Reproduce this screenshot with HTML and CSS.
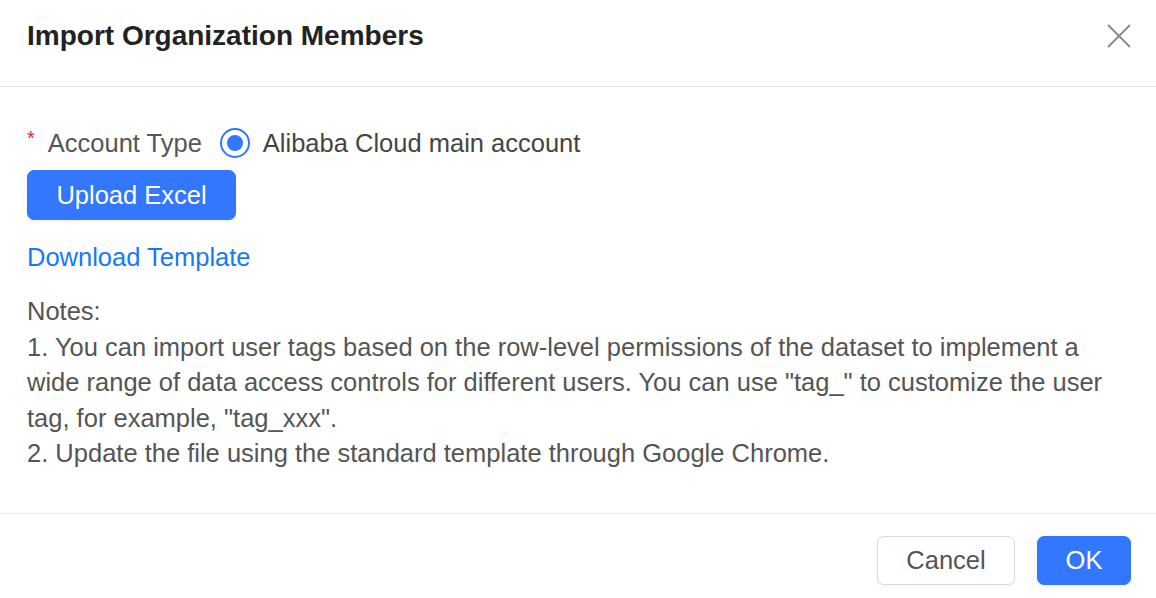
FILE: index.html
```html
<!DOCTYPE html>
<html>
<head>
<meta charset="utf-8">
<link rel="stylesheet" href="styles.css">
</head>
<body>
<div class="dialog">
  <div class="header">
    <div class="title">Import Organization Members</div>
    <button class="close" aria-label="Close">
      <svg width="24" height="24" viewBox="0 0 24 24"><path d="M1 1 L23 23 M23 1 L1 23" stroke="#8c8c8c" stroke-width="2" fill="none"/></svg>
    </button>
  </div>
  <div class="body">
    <div class="field">
      <span class="req">*</span>
      <span class="label">Account Type</span>
      <span class="radio"><span class="dot"></span></span>
      <span class="option">Alibaba Cloud main account</span>
    </div>
    <button class="btn primary upload">Upload Excel</button>
    <a class="link" href="#">Download Template</a>
    <div class="notes">
      <div class="notes-title">Notes:</div>
      <div>1. You can import user tags based on the row-level permissions of the dataset to implement a wide range of data access controls for different users. You can use "tag_" to customize the user tag, for example, "tag_xxx".</div>
      <div>2. Update the file using the standard template through Google Chrome.</div>
    </div>
  </div>
  <div class="footer">
    <button class="btn default">Cancel</button>
    <button class="btn primary ok">OK</button>
  </div>
</div>
</body>
</html>
```
FILE: styles.css
```css
* { box-sizing: border-box; }
html, body { margin: 0; padding: 0; background: #fff; }
body {
  font-family: "Liberation Sans", Arial, Helvetica, sans-serif;
  color: #555;
  width: 1156px;
  height: 598px;
  overflow: hidden;
}
.dialog { display: flex; flex-direction: column; height: 598px; }
.header {
  height: 87px;
  border-bottom: 1px solid #e8e8e8;
  display: flex;
  align-items: center;
  justify-content: space-between;
  padding: 0 27px 14px 27px;
}
.title {
  font-size: 28px;
  font-weight: bold;
  color: #222;
}
.close {
  border: none;
  background: none;
  padding: 0;
  width: 24px;
  height: 24px;
  display: flex;
  margin-right: -2px;
}
.body {
  padding: 0 27px;
  height: 427px;
  border-bottom: 1px solid #ebebeb;
  display: flex;
  flex-direction: column;
  align-items: flex-start;
}
.field {
  margin-top: 40px;
  display: flex;
  align-items: center;
  height: 32px;
  font-size: 25.5px;
}
.req { color: #f5222d; font-size: 20px; margin-right: 13px; align-self: flex-start; }
.label { color: #555; margin-right: 18px; }
.radio {
  width: 30px;
  height: 30px;
  border: 2px solid #3377ff;
  border-radius: 50%;
  display: flex;
  align-items: center;
  justify-content: center;
  margin-right: 13px;
}
.dot { width: 16px; height: 16px; border-radius: 50%; background: #3377ff; }
.option { color: #444; }
.btn {
  font-family: inherit;
  font-size: 25.5px;
  border-radius: 7px;
  cursor: pointer;
  display: flex;
  align-items: center;
  justify-content: center;
}
.primary { background: #3377ff; color: #fff; border: 1px solid #3377ff; box-shadow: 0 2px 3px rgba(0,0,0,0.06); }
.default { background: #fff; color: #555; border: 1px solid #d9d9d9; box-shadow: 0 2px 3px rgba(0,0,0,0.04); }
.upload { margin-top: 11px; width: 209px; height: 50px; }
.link {
  margin-top: 23px;
  font-size: 25.5px;
  color: #1677ff;
  text-decoration: none;
  line-height: 28px;
}
.notes {
  margin-top: 23px;
  font-size: 25.5px;
  line-height: 35.5px;
  color: #555;
  width: 1102px;
}
.footer {
  flex: 1;
  display: flex;
  justify-content: flex-end;
  align-items: flex-start;
  padding: 22px 25px 0 0;
  gap: 22px;
}
.footer .default { width: 138px; height: 49px; }
.footer .ok { width: 94px; height: 49px; }
```
